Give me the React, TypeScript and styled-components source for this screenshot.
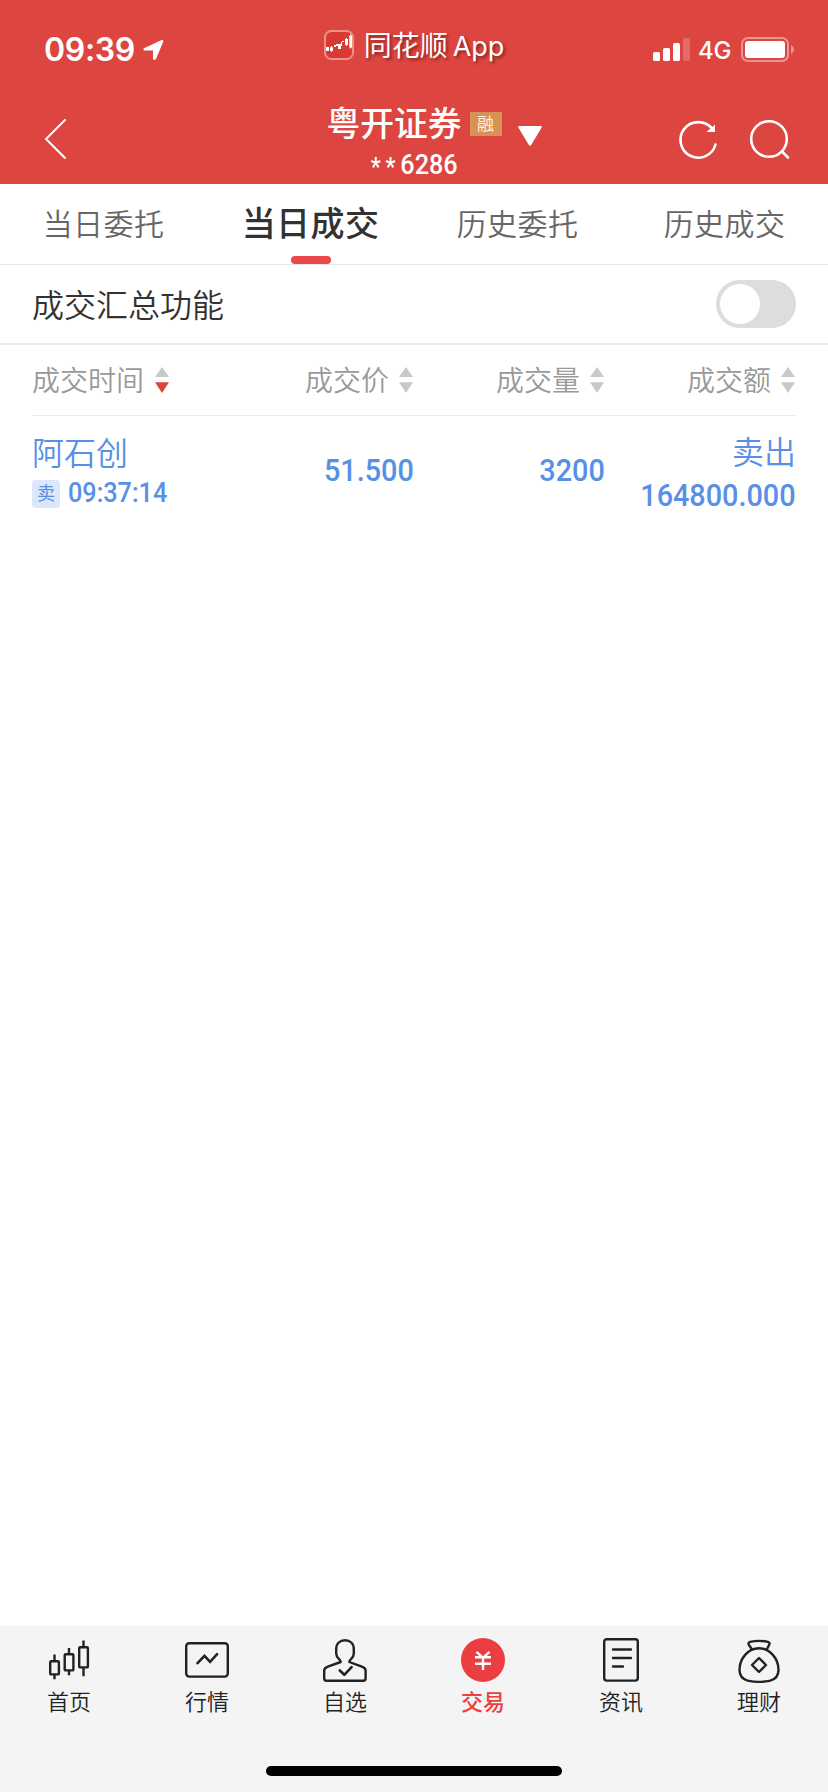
import React from "react";
import styled, { createGlobalStyle, css } from "styled-components";

const GlobalStyle = createGlobalStyle`
  * { box-sizing: border-box; }
  body {
    margin: 0;
    background: #fff;
    font-family: "Noto Sans CJK SC", sans-serif;
    color: #323232;
  }
  svg { display: block; flex: none; }
`;

const Screen = styled.div`
  width: 828px;
  height: 1792px;
  display: flex;
  flex-direction: column;
  background: #fff;
  overflow: hidden;
`;

const Header = styled.header`
  height: 184px;
  background: #dd4540;
  color: #fff;
`;

const StatusBar = styled.div`
  height: 96px;
  display: grid;
  grid-template-columns: 1fr auto 1fr;
`;

const StatusTime = styled.div`
  display: flex;
  align-items: flex-start;
  gap: 8px;
  padding: 32px 0 0 44px;
  font: 600 32px/36px Inter, sans-serif;
  letter-spacing: -0.35px;
  svg { margin-top: 7px; }
`;

const AppLink = styled.div`
  display: flex;
  align-items: flex-start;
  padding-top: 30px;
`;

const AppName = styled.span`
  margin: -4px 0 0 10px;
  font-size: 28px;
  line-height: 36px;
  text-shadow: 2px 2px 3px rgba(60, 0, 0, 0.5);
  white-space: nowrap;
`;

const Latin = styled.span`
  margin-left: 5px;
  font-family: Inter, sans-serif;
  font-size: 27px;
  letter-spacing: 0;
`;

const StatusRight = styled.div`
  display: flex;
  justify-content: flex-end;
  align-items: flex-start;
  padding: 37px 34px 0 0;
`;

const Network = styled.span`
  margin: 0 10px 0 8px;
  font: 500 24px/27px Inter, sans-serif;
  letter-spacing: -0.4px;
`;

const NavBar = styled.div`
  height: 88px;
  display: grid;
  grid-template-columns: 1fr auto 1fr;
`;

const Back = styled.div`
  padding: 22px 0 0 44px;
`;

const Account = styled.div`
  display: flex;
  flex-direction: column;
  align-items: center;
`;

const Broker = styled.div`
  display: flex;
  align-items: center;
  height: 56px;
  font-size: 33.8px;
  font-weight: 500;
  white-space: nowrap;
  svg { margin: 30px -40px 0 16px; align-self: flex-start; }
`;

const BrokerName = styled.span`
  line-height: 40px;
  margin-top: -4px;
`;

const MarginTag = styled.span`
  width: 32px;
  height: 24px;
  margin: 0 0 0 8px;
  background: #d69355;
  color: #fff3df;
  font-size: 17px;
  font-weight: 400;
  line-height: 22px;
  text-align: center;
`;

const AccountNo = styled.div`
  display: flex;
  margin-top: -3px;
  font: 500 28px/32px Roboto, sans-serif;
  transform: scaleX(0.9);
`;

const Mask = styled.span`
  margin-top: 3px;
  font-size: 25px;
  letter-spacing: 5.3px;
`;

const Actions = styled.div`
  display: flex;
  justify-content: flex-end;
  gap: 32px;
  padding: 22px 38px 0 0;
`;

const Tabs = styled.nav`
  height: 81px;
  display: grid;
  grid-template-columns: repeat(4, 1fr);
  border-bottom: 1px solid #e8e8e8;
`;

const Tab = styled.div<{ $active?: boolean }>`
  display: flex;
  flex-direction: column;
  align-items: center;
  justify-content: space-between;
  padding-top: 18px;
  font-size: 30px;
  line-height: 40px;
  letter-spacing: 0.4px;
  font-weight: 350;
  color: #666;
  ${(p) =>
    p.$active &&
    css`
      font-size: 34px;
      font-weight: 500;
      color: #323232;
      &::after {
        content: "";
        width: 40px;
        height: 8px;
        border-radius: 4px;
        background: #eb484c;
      }
    `}
`;

const SummaryRow = styled.div`
  height: 80px;
  display: flex;
  align-items: center;
  justify-content: space-between;
  padding: 0 32px;
  border-bottom: 2px solid #ededed;
  font-size: 32px;
  line-height: 40px;
`;

const SummaryLabel = styled.span`
  margin-top: -3px;
  font-weight: 350;
`;

const Toggle = styled.div`
  width: 80px;
  height: 48px;
  padding: 4px;
  border-radius: 24px;
  background: #ddd;
  &::before {
    content: "";
    display: block;
    width: 40px;
    height: 40px;
    border-radius: 50%;
    background: #fff;
  }
`;

const Columns = styled.div`
  display: grid;
  grid-template-columns: 191px 191px 191px 191px;
  margin: 0 32px;
`;

const TableHead = styled(Columns)`
  height: 71px;
  border-bottom: 1px solid #ededed;
  color: #999;
  font-size: 28px;
  font-weight: 350;
  line-height: 40px;
`;

const HeadCell = styled.div<{ $left?: boolean }>`
  display: flex;
  justify-content: ${(p) => (p.$left ? "flex-start" : "flex-end")};
  gap: ${(p) => (p.$left ? 11 : 10)}px;
  padding: 14px 1px 0 0;
  svg { margin-top: 8px; }
`;

const TableRow = styled(Columns)`
  height: 112px;
  color: #5790e6;
`;

const Cell = styled.div<{ $left?: boolean }>`
  display: flex;
  flex-direction: column;
  align-items: ${(p) => (p.$left ? "flex-start" : "flex-end")};
`;

const Name = styled.span`
  margin-top: 15px;
  font-size: 32px;
  font-weight: 350;
  line-height: 40px;
`;

const Side = styled(Name)`
  margin-top: 14px;
`;

const Figure = styled.span<{ $top: number }>`
  margin-top: ${(p) => p.$top}px;
  font: 500 32px/38px Roboto, sans-serif;
  transform: scaleX(0.9);
  transform-origin: right;
`;

const TimeLine = styled.div`
  display: flex;
  align-items: center;
  gap: 8px;
  height: 28px;
  margin-top: 9px;
`;

const SellTag = styled.span`
  width: 28px;
  height: 28px;
  border-radius: 4px;
  background: #dce7fa;
  font-size: 18px;
  line-height: 25px;
  text-align: center;
`;

const Time = styled.span`
  font: 500 28px/28px Roboto, sans-serif;
  margin-top: -3px;
  transform: scaleX(0.9);
  transform-origin: left;
`;

const BottomBar = styled.footer`
  height: 166px;
  margin-top: auto;
  display: flex;
  flex-direction: column;
  align-items: center;
  justify-content: space-between;
  padding-bottom: 16px;
  background: #f4f4f4;
`;

const NavItems = styled.div`
  width: 100%;
  display: grid;
  grid-template-columns: repeat(6, 1fr);
`;

const NavItem = styled.div<{ $active?: boolean }>`
  display: flex;
  flex-direction: column;
  align-items: center;
  padding-top: 10px;
  color: ${(p) => (p.$active ? "#ea3e41" : "#222")};
  font-size: 22px;
  font-weight: ${(p) => (p.$active ? 500 : 350)};
  line-height: 32px;
`;

const HomeIndicator = styled.div`
  width: 296px;
  height: 10px;
  border-radius: 5px;
  background: #000;
`;

const Sort = ({ desc }: { desc?: boolean }) => (
  <svg width="14" height="26" viewBox="0 0 14 26">
    <path d="M7 0L14 10H0z" fill="#c9c9c9" />
    <path d="M0 15.3H14L7 26z" fill={desc ? "#d9453d" : "#c9c9c9"} />
  </svg>
);

const NavIcon = ({ children }: { children: React.ReactNode }) => (
  <svg width="48" height="48" viewBox="0 0 48 48" fill="none" stroke="#222" strokeWidth="2.4" strokeLinejoin="round">
    {children}
  </svg>
);

const candles = (
  <NavIcon>
    <rect x="5.2" y="25.2" width="8.7" height="13.2" rx="1" />
    <rect x="19.7" y="18.2" width="8.7" height="16.2" rx="1" />
    <rect x="34.2" y="11.2" width="8.7" height="20.2" rx="1" />
    <path d="M9.5 18.5v6M9.5 39v4.3M24 12v6M24 35v4.3M38.5 4.5v6M38.5 32v8.3" />
  </NavIcon>
);

const quotes = (
  <NavIcon>
    <rect x="3.2" y="7.2" width="41.6" height="33.4" rx="3" />
    <path d="M14.5 27.2l7-7.4 5.600 6 7-7.700" strokeWidth="2.6" strokeLinecap="round" strokeLinejoin="miter" />
  </NavIcon>
);

const watchlist = (
  <NavIcon>
    <path d="M19.700 26c0-3.200-4.500-3.400-4.500-8.500v-4.500c0-5.500 3.700-8.800 8.800-8.800s8.800 3.300 8.800 8.800v4.500c0 5.100-4.500 5.300-4.500 8.500l12.600 4.700c2.200.8 3.700 1.500 3.700 3.800v8.100c0 1.400-.8 2.200-2.200 2.200H5.400c-1.400 0-2.200-.8-2.200-2.200v-8.100c0-2.300 1.500-3 3.700-3.800z" />
    <path d="M18.800 34.500l4.500 4.300 7.300-7.600" strokeWidth="2.6" strokeLinecap="round" />
  </NavIcon>
);

const trade = (
  <NavIcon>
    <circle cx="24" cy="24" r="22" fill="#ea3e41" stroke="none" />
    <path d="M17.500 15.800l6.500 6 6.500-6M24 21.500V34M16 21.300h16M16 27.800h16" stroke="#fff" strokeLinejoin="miter" />
  </NavIcon>
);

const news = (
  <NavIcon>
    <rect x="7.200" y="3.200" width="33.600" height="41.400" rx="2.500" />
    <path d="M16 13.500h18M16 22h18M16 30.500h10" strokeLinecap="round" />
  </NavIcon>
);

const wealth = (
  <NavIcon>
    <path d="M17.500 14l-3.700-5.300c-.8-1.300-.2-2.400 1.300-2.800 5.500-1.300 12.300-1.300 17.800 0 1.500.4 2.100 1.500 1.300 2.800L31.500 14" />
    <path d="M24 12.200c11 0 19.500 10.500 19.500 21.600 0 6-3.200 9.500-8.200 10.800-6.500 1.500-16.100 1.500-22.600 0-5-1.300-8.200-4.800-8.200-10.800C4.500 22.700 13 12.200 24 12.200z" />
    <path d="M24 22l7 7-7 7-7-7z" />
  </NavIcon>
);

const tabs = ["当日委托", "当日成交", "历史委托", "历史成交"];
const heads = ["成交时间", "成交价", "成交量", "成交额"];
const navItems = [
  { label: "首页", icon: candles },
  { label: "行情", icon: quotes },
  { label: "自选", icon: watchlist },
  { label: "交易", icon: trade },
  { label: "资讯", icon: news },
  { label: "理财", icon: wealth },
];

export default function App() {
  return (
    <Screen>
      <GlobalStyle />
      <Header>
        <StatusBar>
          <StatusTime>
            09:39
            <svg width="21" height="22" viewBox="0 0 21 22">
              <path d="M1.500 9L18.200 1.200Q20.800 .6 20.100 3L13 20Q11.300 22 10 20V11.500H1.500Q-.8 10.500 1.500 9z" fill="#fff" />
            </svg>
          </StatusTime>
          <AppLink>
            <svg width="30" height="30" viewBox="0 0 30 30">
              <rect x="1" y="1" width="28" height="28" rx="6.500" fill="#d93b34" stroke="#ee918c" strokeWidth="2" />
              <path d="M2 17h3v4H2zM14 14h3v5h-3zM21 9h3v6h-3zM22 8h1v8h-1zM10 15h2v2h-2zM12 14h2v2h-2zM17 12h1v4h-1zM18 11h2v1h-2z" fill="#fff" />
              <path d="M6.500 17.500h2v3h-2zM7.500 16v6M25.800 5.800h1.700v11.500h-1.700zM26.600 4.500v14" fill="none" stroke="#fff" strokeWidth="1" />
            </svg>
            <AppName>
              同花顺<Latin>App</Latin>
            </AppName>
          </AppLink>
          <StatusRight>
            <svg width="37" height="24" viewBox="0 0 37 24" fill="#fff">
              <rect x="0" y="15" width="7" height="9" rx="1.500" />
              <rect x="10" y="11" width="7" height="13" rx="1.500" />
              <rect x="20" y="6" width="7" height="18" rx="1.500" />
              <rect x="30" y="1" width="7" height="23" rx="1.500" opacity=".2" />
            </svg>
            <Network>4G</Network>
            <svg width="53" height="25" viewBox="0 0 53 25">
              <rect x="1" y="1" width="46" height="23" rx="6" fill="none" stroke="#ea9592" strokeWidth="2" />
              <rect x="4" y="4" width="40" height="17" rx="3" fill="#fff" />
              <path d="M50 8c4 2 4 7 0 9z" fill="#ea9592" />
            </svg>
          </StatusRight>
        </StatusBar>
        <NavBar>
          <Back>
            <svg width="22" height="42" viewBox="0 0 22 42" fill="none" stroke="#fff" strokeWidth="2">
              <path d="M21 2L2 21l19 19" strokeLinecap="round" />
            </svg>
          </Back>
          <Account>
            <Broker>
              <BrokerName>粤开证券</BrokerName>
              <MarginTag>融</MarginTag>
              <svg width="24" height="20" viewBox="0 0 24 20">
                <path d="M1.500 0h21q2 0 1 1.800L13.300 18.700Q12 20.600 10.700 18.700L.5 1.800Q-.5 0 1.500 0z" fill="#fff" />
              </svg>
            </Broker>
            <AccountNo>
              <Mask>**</Mask>6286
            </AccountNo>
          </Account>
          <Actions>
            <svg width="38" height="42" viewBox="0 0 38 42" fill="none" stroke="#fff" strokeWidth="2.600">
              <path d="M36.500 26.500A17.800 17.800 0 1 1 33 10.500" strokeLinecap="round" />
              <path d="M36 6.500v7.500h-8.500z" fill="#fff" stroke="none" />
            </svg>
            <svg width="41" height="42" viewBox="0 0 41 42" fill="none" stroke="#fff" strokeWidth="2.600">
              <circle cx="20" cy="21" r="17.800" />
              <path d="M33 33.500l6 6" strokeLinecap="round" />
            </svg>
          </Actions>
        </NavBar>
      </Header>
      <Tabs>
        {tabs.map((label, i) => (
          <Tab key={label} $active={i === 1}>
            {label}
          </Tab>
        ))}
      </Tabs>
      <SummaryRow>
        <SummaryLabel>成交汇总功能</SummaryLabel>
        <Toggle />
      </SummaryRow>
      <TableHead>
        {heads.map((label, i) => (
          <HeadCell key={label} $left={i === 0}>
            {label}
            <Sort desc={i === 0} />
          </HeadCell>
        ))}
      </TableHead>
      <TableRow>
        <Cell $left>
          <Name>阿石创</Name>
          <TimeLine>
            <SellTag>卖</SellTag>
            <Time>09:37:14</Time>
          </TimeLine>
        </Cell>
        <Cell>
          <Figure $top={35}>51.500</Figure>
        </Cell>
        <Cell>
          <Figure $top={35}>3200</Figure>
        </Cell>
        <Cell>
          <Side>卖出</Side>
          <Figure $top={6}>164800.000</Figure>
        </Cell>
      </TableRow>
      <BottomBar>
        <NavItems>
          {navItems.map(({ label, icon }) => (
            <NavItem key={label} $active={label === "交易"}>
              {icon}
              {label}
            </NavItem>
          ))}
        </NavItems>
        <HomeIndicator />
      </BottomBar>
    </Screen>
  );
}
